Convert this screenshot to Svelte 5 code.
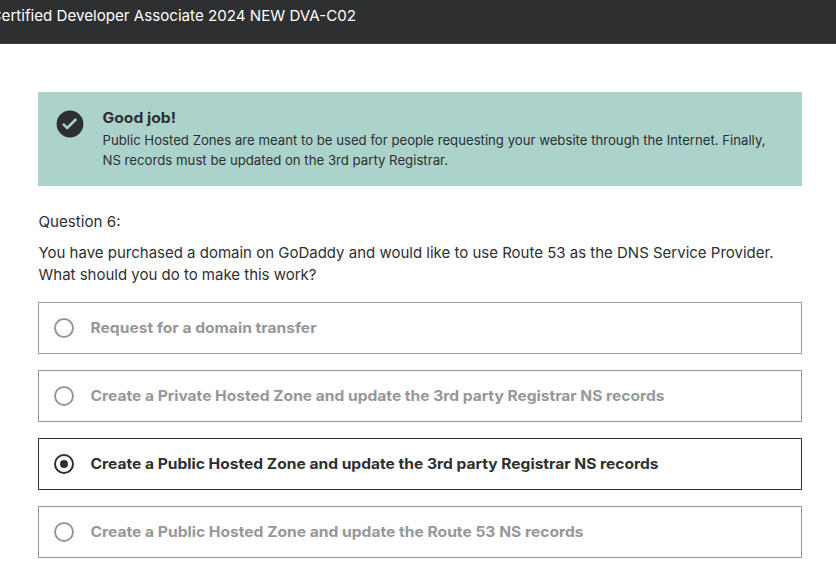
<script>
  const w = (text, width) => ({ text, width });
  const explanation = [
    w('Public Hosted Zones are meant to be used for people requesting your website through the Internet. Finally,', 663),
    w('NS records must be updated on the 3rd party Registrar.', 345.5)
  ];
  const question = [
    w('You have purchased a domain on GoDaddy and would like to use Route 53 as the DNS Service Provider.', 735),
    w('What should you do to make this work?', 278)
  ];
  const answers = [
    w('Request for a domain transfer', 226),
    w('Create a Private Hosted Zone and update the 3rd party Registrar NS records', 574),
    w('Create a Public Hosted Zone and update the 3rd party Registrar NS records', 568),
    w('Create a Public Hosted Zone and update the Route 53 NS records', 493)
  ];
  let selected = $state(2);
</script>

{#snippet line(item, size)}
  <svg class="line" width={item.width + 4} height="22" style:font-size="{size}px">
    <text x="0.5" y="16" textLength={item.width} lengthAdjust="spacingAndGlyphs" fill="currentColor">{item.text}</text>
  </svg>
{/snippet}

<div class="page">
  <header>{@render line(w('Certified Developer Associate 2024 NEW DVA-C02', 365.5), 14.8)}</header>
  <main>
    <section class="feedback">
      <svg class="check" viewBox="0 0 28 28"><circle cx="14" cy="14" r="13.4" fill="#2d2f31"/><path d="M7 13.9l4.2 4.1 9-9" fill="none" stroke="#acd2cc" stroke-width="2.5"/></svg>
      <div>
        <h2>{@render line(w('Good job!', 73.5), 14.6)}</h2>
        <div class="explain">{#each explanation as e}{@render line(e, 13)}{/each}</div>
      </div>
    </section>
    <div class="number">{@render line(w('Question 6:', 82), 14.8)}</div>
    <div class="prompt">{#each question as q}{@render line(q, 14.8)}{/each}</div>
    <div class="answers">
      {#each answers as answer, i}
        <button class:selected={selected === i} onclick={() => (selected = i)}>
          <span class="radio"></span>
          {@render line(answer, 14.6)}
        </button>
      {/each}
    </div>
  </main>
</div>

<style>
  :global(body) { margin: 0; background: #fff; }
  .page { width: 836px; height: 575px; overflow: hidden; color: #2d2f31; font-family: Inter, "Liberation Sans", sans-serif; }
  header { height: 44px; box-sizing: border-box; background: #2d2f31; border-bottom: 1px solid #3e4143; color: #fff; padding-top: 5px; }
  header .line { margin-left: -10px; }
  .line { display: block; overflow: visible; flex: none; }
  main { padding: 48px 34px 0 38px; }
  .feedback { height: 94px; box-sizing: border-box; background: #acd2cc; display: flex; padding: 15px 0 0 18px; gap: 18px; }
  .check { width: 28px; height: 28px; margin-top: 3px; flex: none; }
  h2 { margin: 0; font-weight: 700; }
  .explain { display: grid; grid-auto-rows: 20px; }
  .number { margin-top: 25px; }
  .prompt { margin-top: 9px; }
  .answers { display: flex; flex-direction: column; gap: 16px; margin-top: 16px; }
  button { height: 52px; box-sizing: border-box; border: 1px solid #969798; background: #fff; padding: 0 15px; display: flex; align-items: center; gap: 16px; font: inherit; font-weight: 700; color: #969798; }
  button.selected { border-color: #2d2f31; color: #2d2f31; }
  .radio { width: 20px; height: 20px; box-sizing: border-box; border: 2px solid currentColor; border-radius: 50%; display: grid; place-items: center; }
  .selected .radio::after { content: ""; width: 8px; height: 8px; border-radius: 50%; background: currentColor; }
</style>
